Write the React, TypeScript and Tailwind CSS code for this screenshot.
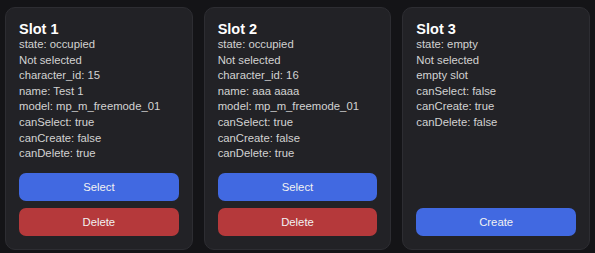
import React from 'react';

type Slot = {
  id: number;
  state: string;
  lines: string[];
  canSelect: boolean;
  canCreate: boolean;
  canDelete: boolean;
};

const slots: Slot[] = [
  {
    id: 1,
    state: 'occupied',
    lines: ['character_id: 15', 'name: Test 1', 'model: mp_m_freemode_01'],
    canSelect: true,
    canCreate: false,
    canDelete: true,
  },
  {
    id: 2,
    state: 'occupied',
    lines: ['character_id: 16', 'name: aaa aaaa', 'model: mp_m_freemode_01'],
    canSelect: true,
    canCreate: false,
    canDelete: true,
  },
  {
    id: 3,
    state: 'empty',
    lines: ['empty slot'],
    canSelect: false,
    canCreate: true,
    canDelete: false,
  },
];

export default function App() {
  return (
    <div
      className="w-[595px] h-[253px] bg-[#141417] px-[5px] pt-[7px] pb-[3px] grid grid-cols-3 gap-[11px]"
      style={{ fontFamily: '"Liberation Sans", Arial, sans-serif' }}
    >
      {slots.map((s) => (
        <div
          key={s.id}
          className="flex flex-col bg-[#222226] border border-[#2d2d32] rounded-[10px] p-[13px]"
        >
          <h2 className="text-[14.5px] leading-[16px] font-bold text-white">Slot {s.id}</h2>
          <div className="text-[11.3px] leading-[15.6px] text-[#d2d2d2]">
            <p>state: {s.state}</p>
            <p>Not selected</p>
            {s.lines.map((l) => (
              <p key={l}>{l}</p>
            ))}
            <p>canSelect: {String(s.canSelect)}</p>
            <p>canCreate: {String(s.canCreate)}</p>
            <p>canDelete: {String(s.canDelete)}</p>
          </div>
          <div className="mt-auto flex flex-col gap-[7px] pt-[11px]">
            {s.canSelect && (
              <button className="h-[28px] rounded-[7px] bg-[#4169e1] text-[#f2f2f2] text-[11.3px]">
                Select
              </button>
            )}
            {s.canDelete && (
              <button className="h-[28px] rounded-[7px] bg-[#b5393b] text-[#f2f2f2] text-[11.3px]">
                Delete
              </button>
            )}
            {s.canCreate && (
              <button className="h-[28px] rounded-[7px] bg-[#4169e1] text-[#f2f2f2] text-[11.3px]">
                Create
              </button>
            )}
          </div>
        </div>
      ))}
    </div>
  );
}
